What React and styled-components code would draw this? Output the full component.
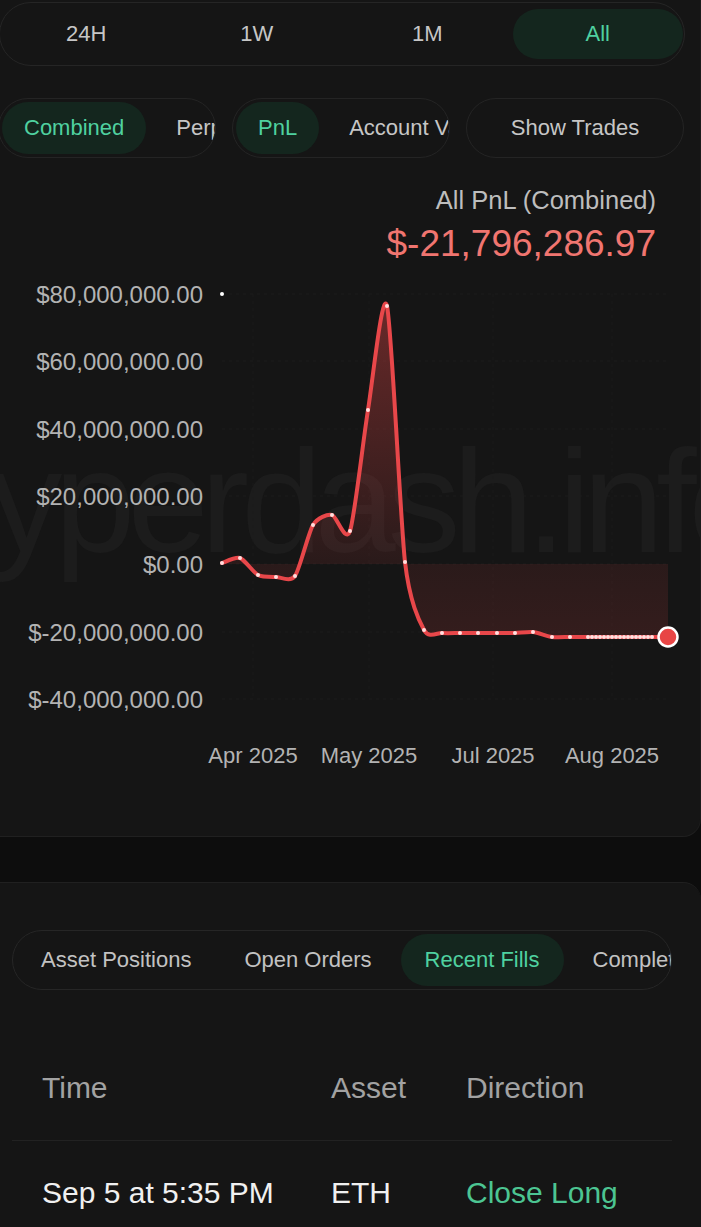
import React from 'react';
import styled, { createGlobalStyle } from 'styled-components';

const GlobalStyle = createGlobalStyle`
  html, body {
    margin: 0;
    background: #0d0d0d;
  }
  body {
    font-family: 'Liberation Sans', Arial, sans-serif;
    width: 701px;
    overflow: hidden;
  }
`;

const Page = styled.div`
  width: 701px;
  min-height: 1227px;
`;

const ChartCard = styled.section`
  box-sizing: border-box;
  height: 837px;
  padding-top: 2px;
  background: #151515;
  border-bottom: 1px solid #202020;
  border-right: 1px solid #1c1c1c;
  border-bottom-right-radius: 18px;
  overflow: hidden;
`;

const TimeBar = styled.div`
  box-sizing: border-box;
  display: flex;
  align-items: center;
  width: 686px;
  height: 64px;
  margin-left: -1px;
  padding: 0 1px;
  border: 1px solid #252525;
  border-radius: 32px;
`;

const TimeTab = styled.div`
  flex: 1;
  height: 50px;
  display: flex;
  align-items: center;
  justify-content: center;
  border-radius: 25px;
  font-size: 22px;
  color: ${(p) => (p.$active ? '#4fd1a0' : '#c6c6c6')};
  background: ${(p) => (p.$active ? '#14261e' : 'transparent')};
`;

const ToggleRow = styled.div`
  display: flex;
  gap: 16px;
  height: 60px;
  margin-top: 32px;
  margin-left: -2px;
`;

const Group = styled.div`
  box-sizing: border-box;
  flex-shrink: 0;
  display: flex;
  align-items: center;
  justify-content: ${(p) => (p.$center ? 'center' : 'flex-start')};
  gap: 8px;
  width: 218px;
  height: 60px;
  padding: 0 3px;
  border: 1px solid #242424;
  border-radius: 30px;
  overflow: hidden;
`;

const Pill = styled.div`
  flex-shrink: 0;
  display: flex;
  align-items: center;
  height: 52px;
  padding: 0 22px;
  border-radius: 26px;
  font-size: 22px;
  white-space: nowrap;
  color: ${(p) => (p.$active ? '#4fd1a0' : '#c6c6c6')};
  background: ${(p) => (p.$active ? '#14261e' : 'transparent')};
`;

const Summary = styled.div`
  text-align: right;
  padding-right: 44px;
`;

const SummaryTitle = styled.div`
  margin-top: 28px;
  font-size: 25.5px;
  line-height: 28px;
  color: #bdbdbd;
`;

const SummaryValue = styled.div`
  margin-top: 10px;
  font-size: 37px;
  line-height: 40px;
  color: #f07570;
`;

const ChartSvg = styled.svg`
  display: block;
  width: 701px;
  height: 573px;
`;

const ListCard = styled.section`
  margin-top: 45px;
  min-height: 345px;
  background: #151515;
  border-top: 1px solid #202020;
  border-top-right-radius: 18px;
  overflow: hidden;
`;

const TabBar = styled.div`
  box-sizing: border-box;
  display: flex;
  align-items: center;
  gap: 5px;
  width: 660px;
  height: 60px;
  margin: 47px 0 0 12px;
  padding: 0 4px;
  border: 1px solid #262626;
  border-radius: 30px;
  overflow: hidden;
`;

const Tab = styled.div`
  flex-shrink: 0;
  display: flex;
  align-items: center;
  height: 52px;
  padding: 0 24px;
  border-radius: 26px;
  font-size: 22px;
  white-space: nowrap;
  color: ${(p) => (p.$active ? '#4fd1a0' : '#c2c2c2')};
  background: ${(p) => (p.$active ? '#14261e' : 'transparent')};
`;

const Table = styled.div`
  margin: 54px 29px 0 12px;
`;

const Row = styled.div`
  display: grid;
  grid-template-columns: 289px 135px 1fr;
  padding: ${(p) => (p.$head ? '29px 0 37px 30px' : '37px 0 0 30px')};
  border-bottom: ${(p) => (p.$head ? '1px solid #222222' : 'none')};
  font-size: 30px;
  line-height: 30px;
  color: ${(p) => (p.$head ? '#a2a2a2' : '#f0f0f0')};
`;

const Cell = styled.div`
  white-space: nowrap;
  color: ${(p) => (p.$green ? '#4cc592' : 'inherit')};
`;

const yTicks = [
  { label: '$80,000,000.00', y: 294 },
  { label: '$60,000,000.00', y: 361 },
  { label: '$40,000,000.00', y: 429 },
  { label: '$20,000,000.00', y: 496 },
  { label: '$0.00', y: 564 },
  { label: '$-20,000,000.00', y: 632 },
  { label: '$-40,000,000.00', y: 699 },
];

const xTicks = [
  { label: 'Apr 2025', x: 253 },
  { label: 'May 2025', x: 369 },
  { label: 'Jul 2025', x: 493 },
  { label: 'Aug 2025', x: 612 },
];

const dense = [];
for (let x = 588; x <= 652; x += 4) dense.push([x, 637]);

const points = [
  [222, 563], [240, 558], [258, 575], [276, 577], [295, 576],
  [313, 525], [332, 515], [350, 531], [368, 410], [387, 306],
  [405, 562], [424, 630], [442, 633], [460, 633], [478, 633],
  [497, 633], [515, 633], [533, 632], [552, 637], [570, 637],
  ...dense,
  [668, 637],
];

// catmull-rom -> cubic bezier, with the control points kept a bit tighter
function smooth(pts, k = 8) {
  let d = `M${pts[0][0]},${pts[0][1]}`;
  for (let i = 0; i < pts.length - 1; i++) {
    const p0 = pts[i - 1] || pts[i];
    const p1 = pts[i];
    const p2 = pts[i + 1];
    const p3 = pts[i + 2] || p2;
    const c1 = [p1[0] + (p2[0] - p0[0]) / k, p1[1] + (p2[1] - p0[1]) / k];
    const c2 = [p2[0] - (p3[0] - p1[0]) / k, p2[1] - (p3[1] - p1[1]) / k];
    d += ` C${c1[0]},${c1[1]} ${c2[0]},${c2[1]} ${p2[0]},${p2[1]}`;
  }
  return d;
}

const FONT = "'Liberation Sans', Arial, sans-serif";

function PnlChart() {
  const line = smooth(points);
  const area = `${line} L668,564 L222,564 Z`;
  return (
    <ChartSvg viewBox="0 264 701 573">
      <defs>
        <linearGradient id="pnlFill" gradientUnits="userSpaceOnUse" x1="0" y1="300" x2="0" y2="640">
          <stop offset="0" stopColor="#e84848" stopOpacity="0.4" />
          <stop offset="0.77" stopColor="#e84848" stopOpacity="0.1" />
          <stop offset="1" stopColor="#e84848" stopOpacity="0.15" />
        </linearGradient>
      </defs>

      <text x="-84" y="552" fontSize="146" letterSpacing="-8" fill="#1c1c1c" fontFamily={FONT}>
        hyperdash.info
      </text>

      {yTicks.map((t) => (
        <line key={t.y} x1="222" x2="668" y1={t.y} y2={t.y} stroke="#1d1d1d" strokeDasharray="3 4" />
      ))}
      {xTicks.map((t) => (
        <line key={t.x} x1={t.x} x2={t.x} y1="294" y2="699" stroke="#1a1a1a" strokeDasharray="3 4" />
      ))}

      {yTicks.map((t) => (
        <text key={t.label} x="203" y={t.y + 8.5} textAnchor="end" fontSize="24" fill="#b3b3b3" fontFamily={FONT}>
          {t.label}
        </text>
      ))}
      {xTicks.map((t) => (
        <text key={t.label} x={t.x} y="763" textAnchor="middle" fontSize="22" fill="#b3b3b3" fontFamily={FONT}>
          {t.label}
        </text>
      ))}

      <path d={area} fill="url(#pnlFill)" />
      <path d={line} fill="none" stroke="#e8474a" strokeWidth="4" strokeLinejoin="round" strokeLinecap="round" />
      {points.slice(0, -1).map(([x, y]) => (
        <circle key={`${x}-${y}`} cx={x} cy={y} r="2" fill="#ffe0e0" />
      ))}
      <circle cx="222" cy="294" r="2" fill="#ffffff" />
      <circle cx="668" cy="637" r="9.5" fill="#e84545" stroke="#ffffff" strokeWidth="2.5" />
    </ChartSvg>
  );
}

export default function App() {
  return (
    <Page>
      <GlobalStyle />
      <ChartCard>
        <TimeBar>
          <TimeTab>24H</TimeTab>
          <TimeTab>1W</TimeTab>
          <TimeTab>1M</TimeTab>
          <TimeTab $active>All</TimeTab>
        </TimeBar>

        <ToggleRow>
          <Group>
            <Pill $active>Combined</Pill>
            <Pill>Perp</Pill>
          </Group>
          <Group>
            <Pill $active>PnL</Pill>
            <Pill>Account Value</Pill>
          </Group>
          <Group $center>
            <Pill>Show Trades</Pill>
          </Group>
        </ToggleRow>

        <Summary>
          <SummaryTitle>All PnL (Combined)</SummaryTitle>
          <SummaryValue>$-21,796,286.97</SummaryValue>
        </Summary>

        <PnlChart />
      </ChartCard>

      <ListCard>
        <TabBar>
          <Tab>Asset Positions</Tab>
          <Tab>Open Orders</Tab>
          <Tab $active>Recent Fills</Tab>
          <Tab>Completed Trades</Tab>
        </TabBar>

        <Table>
          <Row $head>
            <Cell>Time</Cell>
            <Cell>Asset</Cell>
            <Cell>Direction</Cell>
          </Row>
          <Row>
            <Cell>Sep 5 at 5:35 PM</Cell>
            <Cell>ETH</Cell>
            <Cell $green>Close Long</Cell>
          </Row>
        </Table>
      </ListCard>
    </Page>
  );
}
